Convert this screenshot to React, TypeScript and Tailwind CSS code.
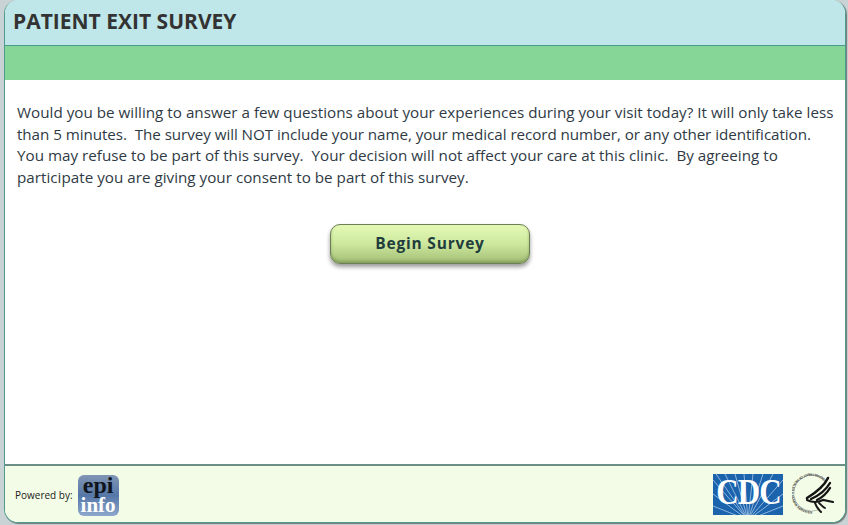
const bodyLines = [
  {
    text: "Would you be willing to answer a few questions about your experiences during your visit today? It will only take less",
    fit: "tracking-[0.02px]",
  },
  {
    text: "than 5 minutes.  The survey will NOT include your name, your medical record number, or any other identification.",
    fit: "tracking-[-0.055px]",
  },
  {
    text: "You may refuse to be part of this survey.  Your decision will not affect your care at this clinic.  By agreeing to",
    fit: "tracking-[0.02px]",
  },
  {
    text: "participate you are giving your consent to be part of this survey.",
    fit: "tracking-[0.02px]",
  },
];

function CdcLogo() {
  return (
    <div className="relative w-[70px] h-[41px] bg-[#1c63ad] overflow-hidden flex items-start justify-center">
      <svg className="absolute inset-0" width="70" height="41" viewBox="0 0 70 41">
        <path
          d="M35 46 L3 0M35 46 L12 0M35 46 L22 0M35 46 L31 0M35 46 L40 0M35 46 L50 0M35 46 L60 0M35 46 L70 6M35 46 L70 20M35 46 L70 32M35 46 L0 6M35 46 L0 20M35 46 L0 32"
          stroke="#8db4dc"
          strokeWidth="1"
          fill="none"
        />
      </svg>
      <span className="relative mt-[1px] font-['Liberation_Serif',serif] font-bold text-white text-[36px] leading-[35px] tracking-[-1px] scale-x-[0.86] whitespace-nowrap">
        CDC
      </span>
    </div>
  );
}

function HhsSeal() {
  return (
    <svg width="42" height="44" viewBox="0 0 42 44" fill="none">
      <defs>
        <path id="seal-arc" d="M33 7 A20 20 0 1 0 29 39" />
      </defs>
      <text fill="#333" fontSize="3.4" fontFamily="Liberation Sans, sans-serif" fontWeight="700">
        <textPath href="#seal-arc">DEPARTMENT OF HEALTH &amp; HUMAN SERVICES</textPath>
      </text>
      <path d="M33 9 A18 18 0 1 0 26 38" stroke="#777" strokeWidth="0.5" />
      <g stroke="#151515" strokeLinecap="round">
        <path d="M36 6 C32 14 25 20 15 26" strokeWidth="2.6" />
        <path d="M38 11 C34 18 28 23 19 27" strokeWidth="2.4" />
        <path d="M38 16 C35 21 31 25 25 28" strokeWidth="2.4" />
        <path d="M15 28 C21 31 27 30 31 28 L41 30" strokeWidth="2.2" />
        <path d="M23 31 C24 34 26 37 29 40" strokeWidth="2" />
        <path d="M27 31 C29 33 31 35 33 36" strokeWidth="1.8" />
      </g>
    </svg>
  );
}

function EpiInfoLogo() {
  return (
    <div className="w-[41px] h-[41px] mt-[3px] rounded-[6px] bg-gradient-to-b from-[#8195b4] via-[#5577a8] to-[#8ea7cc] flex flex-col items-center justify-center font-['Liberation_Serif',serif] font-bold leading-none">
      <span className="text-[#10141c] text-[24px] leading-[19px]">epi</span>
      <span className="text-white text-[21px] leading-[20px]">info</span>
    </div>
  );
}

export default function App() {
  return (
    <div className="w-[848px] h-[525px] bg-[#c9d3d6] font-['Open_Sans',sans-serif] overflow-hidden">
      <div className="mx-1 w-[842px] h-[523px] flex flex-col border-x border-b border-[#4f9c8c] rounded-[14px] overflow-hidden bg-white shadow-[1px_1px_1px_#777]">
        <div className="h-[46px] shrink-0 bg-[#bfe6e9] border-b border-[#4b9a8f] pl-[8px] pb-[3px] flex items-center">
          <h1 className="text-[21px] font-bold text-[#333333] leading-none">PATIENT EXIT SURVEY</h1>
        </div>
        <div className="h-[34px] shrink-0 bg-[#86d698]" />
        <div className="flex-1 pt-[22px] px-3 flex flex-col">
          <div className="text-[15.2px] leading-[21.5px] text-[#2f3a45] whitespace-pre">
            {bodyLines.map((line) => (
              <p key={line.text} className={line.fit}>
                {line.text}
              </p>
            ))}
          </div>
          <button className="self-start ml-[313px] mt-[36px] w-[200px] h-[40px] rounded-[10px] border border-[#6d8055] bg-gradient-to-b from-[#e4f9b6] via-[#cde89d] to-[#a3bf76] shadow-[0_3px_4px_rgba(0,0,0,0.4),inset_0_-2px_3px_rgba(90,115,60,0.45)] text-[15.5px] font-bold tracking-[0.8px] text-[#1f3d3d]">
            Begin Survey
          </button>
        </div>
        <div className="h-[58px] shrink-0 bg-[#f2fce6] border-t-2 border-t-[#6b8f86] pl-[10px] pr-[11px] flex items-center">
          <span className="mt-[3px] text-[10px] text-[#222] mr-[5px]">Powered by:</span>
          <EpiInfoLogo />
          <div className="ml-auto flex items-center gap-[9px]">
            <CdcLogo />
            <HhsSeal />
          </div>
        </div>
      </div>
    </div>
  );
}
